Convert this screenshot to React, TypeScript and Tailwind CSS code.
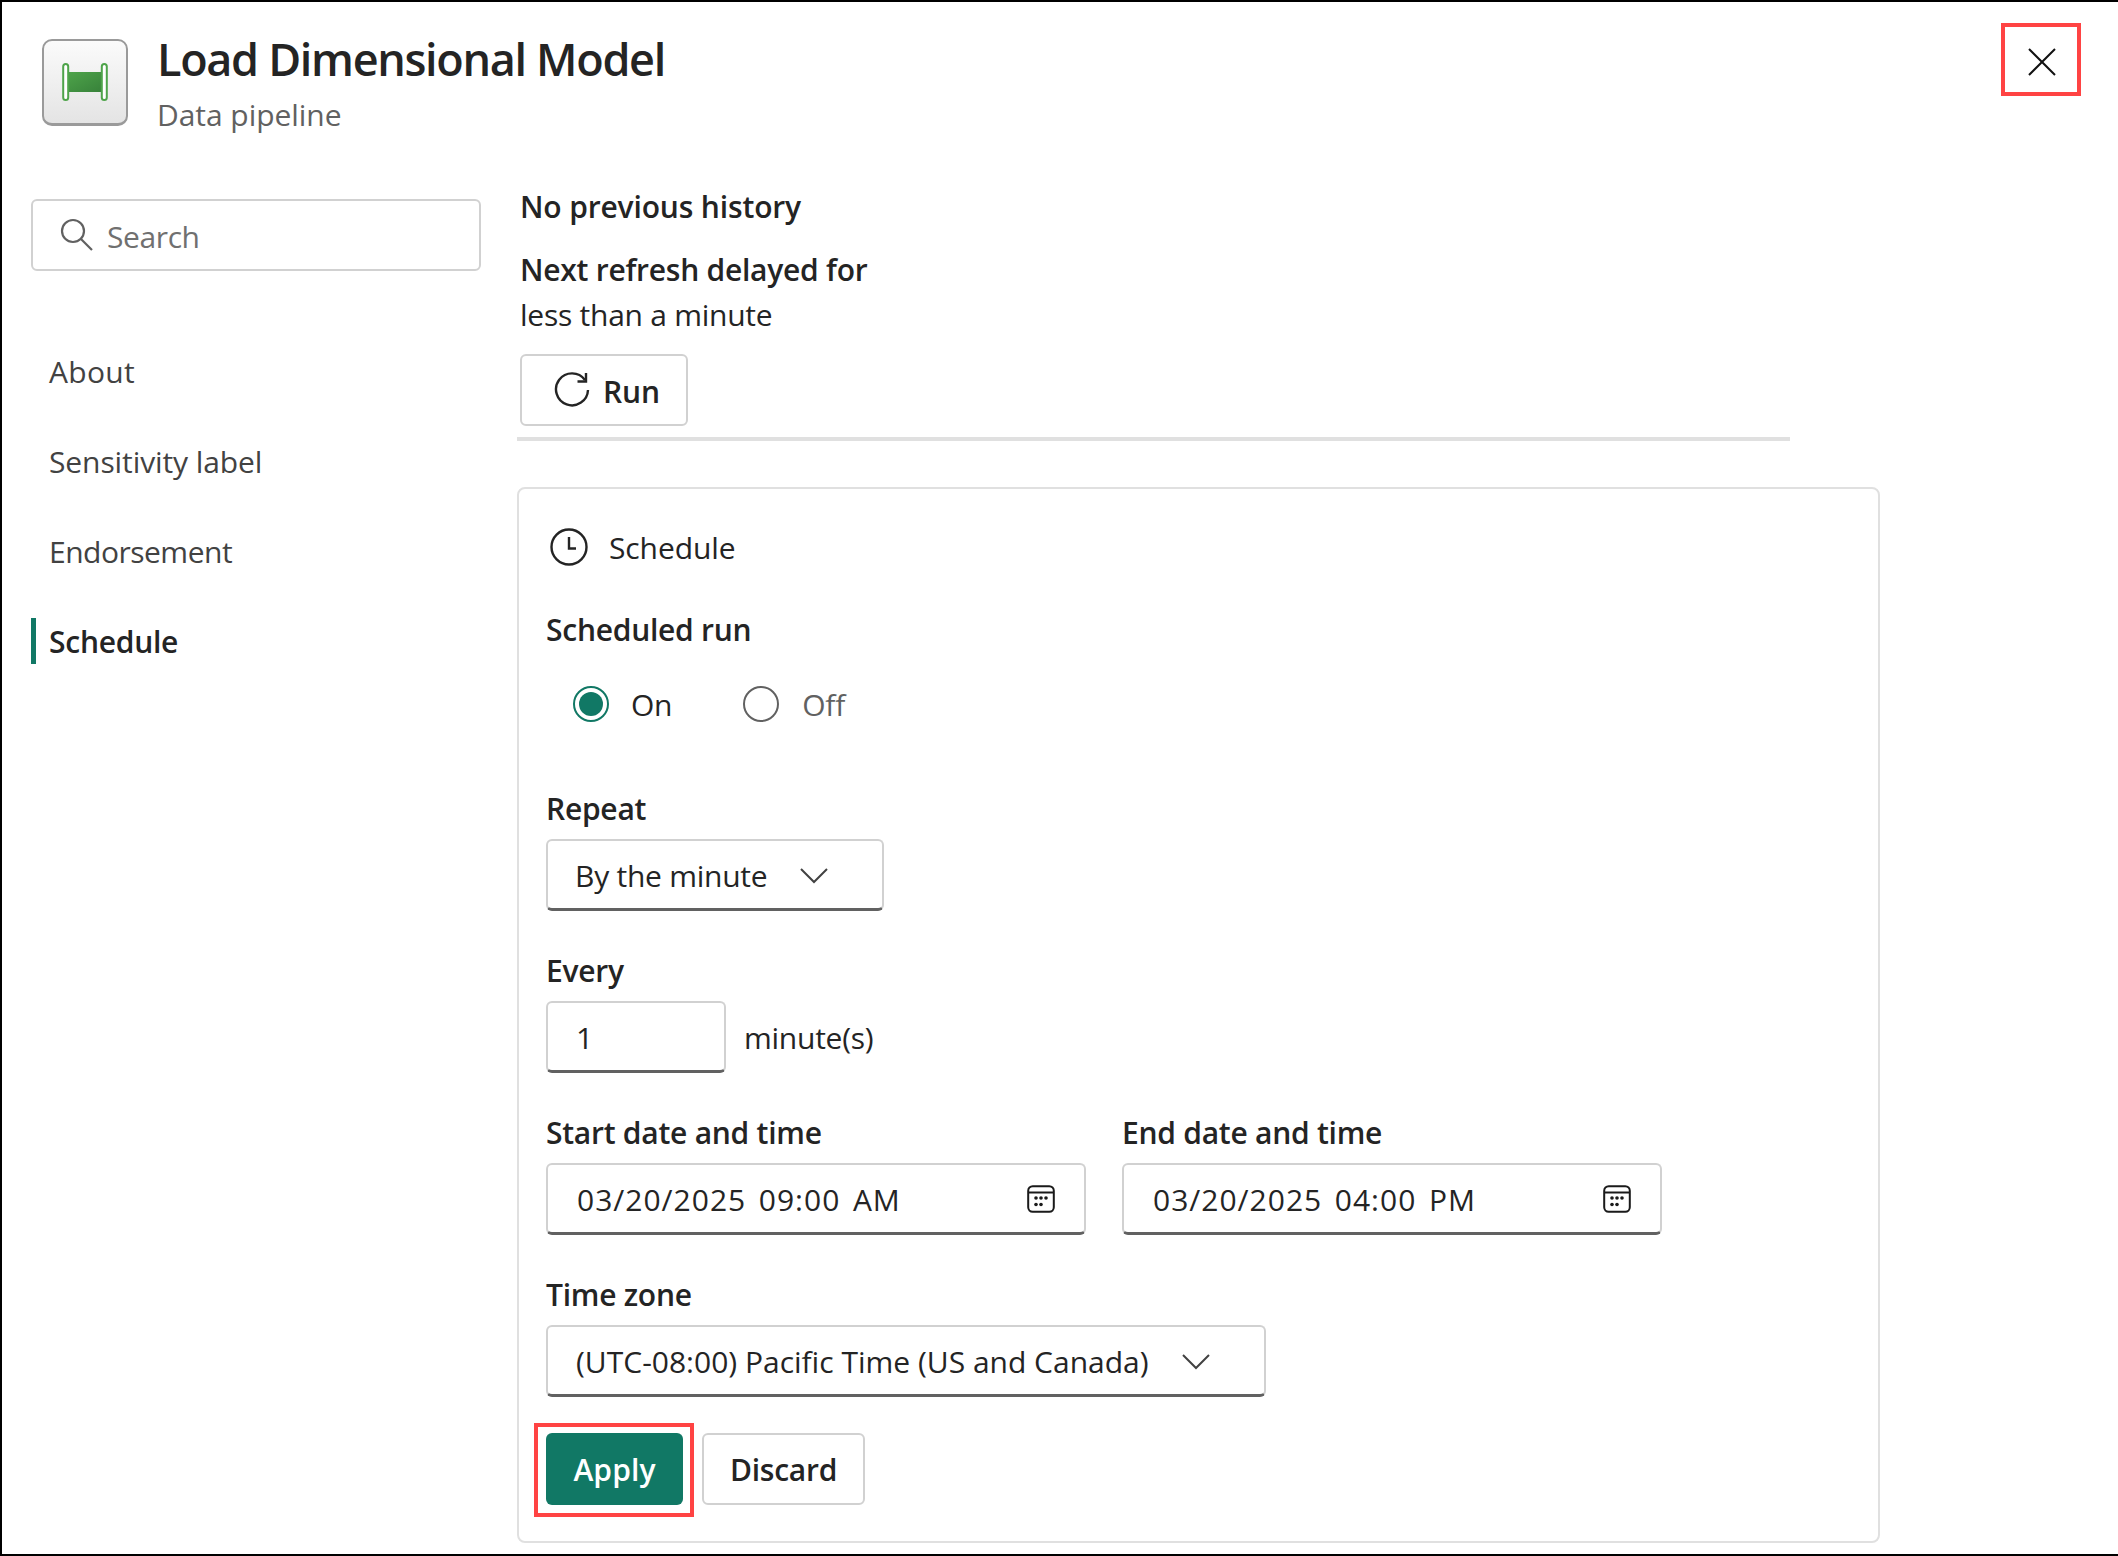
import React from "react";

const F = "font-['Open_Sans','Noto_Sans',sans-serif]";

function Chevron() {
  return (
    <svg width="30" height="18" viewBox="0 0 30 18" fill="none" stroke="#424242" strokeWidth="2">
      <path d="M2 2 L15 15 L28 2" />
    </svg>
  );
}

function Calendar() {
  return (
    <svg width="28" height="28" viewBox="0 0 28 28" fill="none" className="shrink-0 mt-[-2px]">
      <rect x="1.2" y="1.2" width="25.6" height="25.6" rx="4.5" stroke="#1a1a1a" strokeWidth="2" />
      <path d="M1.5 7.5 H26.5" stroke="#1a1a1a" strokeWidth="2" />
      <g fill="#1a1a1a">
        <circle cx="9" cy="13" r="1.8" /><circle cx="14" cy="13" r="1.8" /><circle cx="19" cy="13" r="1.8" />
        <circle cx="9" cy="19.5" r="1.8" /><circle cx="14" cy="19.5" r="1.8" />
      </g>
    </svg>
  );
}

function Label({ children, className = "" }: { children: React.ReactNode; className?: string }) {
  return <div className={"h-[42px] flex items-center text-[30px] font-semibold tracking-[-0.25px] text-[#242424] " + className}>{children}</div>;
}

function Field({ w, children }: { w: string; children: React.ReactNode }) {
  return (
    <div className={w + " h-[72px] flex items-center pt-[2px] rounded-[6px] border-2 border-[#d1d1d1] border-b-[3px] border-b-[#616161] bg-white text-[30px] tracking-[-0.25px] text-[#242424]"}>
      {children}
    </div>
  );
}

function NavItem({ label, active, track }: { label: string; active?: boolean; track: string }) {
  return (
    <div className="relative h-[46px] flex items-center pl-[18px] mb-[44px]">
      {active && <span className="absolute left-0 top-0 h-[46px] w-[5px] bg-[#117865]" />}
      <span className={"text-[30px] " + track + " " + (active ? "font-semibold text-[#242424]" : "text-[#424242]")}>{label}</span>
    </div>
  );
}

function DateField({ value }: { value: string }) {
  return (
    <Field w="w-[540px]">
      <span className="pl-[29px] flex-1 whitespace-pre tracking-[1px] [word-spacing:-2.5px]">{value}</span>
      <span className="pr-[29px] flex"><Calendar /></span>
    </Field>
  );
}

export default function App() {
  return (
    <div className={F + " relative w-[2118px] h-[1556px] bg-white overflow-hidden border-t-2 border-l-2 border-b-2 border-black"}>
      {/* header */}
      <div className="flex pl-[40px] pt-[37px] h-[197px]">
        <div className="w-[86px] h-[87px] rounded-[10px] border-2 border-[#9a9a9a] border-b-[3px] bg-gradient-to-b from-[#fbfbfb] to-[#e4e4e4] flex items-center justify-center">
          <svg width="46" height="38" viewBox="0 0 46 38">
            <defs>
              <linearGradient id="pipe" x1="0" y1="0" x2="1" y2="1">
                <stop offset="0" stopColor="#4ea44a" />
                <stop offset="1" stopColor="#37813a" />
              </linearGradient>
            </defs>
            <rect x="5" y="9" width="36" height="20" fill="url(#pipe)" />
            <rect x="1.2" y="1" width="5" height="36" rx="2.5" fill="#fff" stroke="#4ea44a" strokeWidth="2" />
            <rect x="39.8" y="1" width="5" height="36" rx="2.5" fill="#fff" stroke="#4ea44a" strokeWidth="2" />
          </svg>
        </div>
        <div className="ml-[29px]">
          <div className="text-[45px] leading-[60px] mt-[-10px] font-semibold tracking-[-1.32px] text-[#242424]">Load Dimensional Model</div>
          <div className="text-[30px] leading-[44px] mt-[4px] tracking-[-0.05px] text-[#616161]">Data pipeline</div>
        </div>
      </div>

      {/* body */}
      <div className="flex">
        <aside className="w-[515px] pl-[29px] shrink-0">
          <div className="w-[450px] h-[72px] rounded-[6px] border-2 border-[#d1d1d1] flex items-center pl-[27px]">
            <svg width="34" height="34" viewBox="0 0 34 34" fill="none" stroke="#616161" strokeWidth="2.2">
              <circle cx="13" cy="13" r="11" />
              <path d="M21 21 L32 32" />
            </svg>
            <span className="ml-[13px] pt-[2px] text-[30px] tracking-[-0.4px] text-[#707070]">Search</span>
          </div>
          <nav className="mt-[77px]">
            <NavItem label="About" track="tracking-[0.3px]" />
            <NavItem label="Sensitivity label" track="tracking-[-0.1px]" />
            <NavItem label="Endorsement" track="tracking-[-0.5px]" />
            <NavItem label="Schedule" track="tracking-[-0.25px]" active />
          </nav>
        </aside>

        <main className="flex-1">
          <div className="pl-[3px]">
            <div className="mt-[-14px] h-[42px] flex items-center text-[30px] font-semibold tracking-[-0.15px] text-[#242424]">No previous history</div>
            <div className="mt-[21px] h-[42px] flex items-center text-[30px] font-semibold tracking-[-0.25px] text-[#242424]">Next refresh delayed for</div>
            <div className="mt-[3px] h-[42px] flex items-center text-[30px] tracking-[-0.25px] text-[#242424]">less than a minute</div>
            <div className="mt-[19px] w-[168px] h-[72px] rounded-[6px] border-2 border-[#d1d1d1] flex items-center pl-[32px]">
              <svg width="36" height="36" viewBox="0 0 36 36" fill="none" stroke="#242424" strokeWidth="2.4">
                <path d="M31 8 A 16 16 0 1 0 34 18" />
                <path d="M32 1 V9.5 H23.5" />
              </svg>
              <span className="ml-[13px] pt-[3px] text-[30px] font-semibold tracking-[-0.1px] text-[#242424]">Run</span>
            </div>
          </div>
          <div className="mt-[11px] w-[1273px] h-[4px] bg-[#e0e0e0]" />

          <section className="mt-[46px] w-[1363px] h-[1056px] rounded-[8px] border-2 border-[#e0e0e0] pl-[27px]">
            <div className="flex items-center h-[40px] mt-[38px] pl-[4px]">
              <svg width="38" height="38" viewBox="0 0 38 38" fill="none" stroke="#242424" strokeWidth="2.4">
                <circle cx="19" cy="19" r="17.5" />
                <path d="M19 9 V20.5 H26" />
              </svg>
              <span className="ml-[21px] text-[30px] tracking-[-0.1px] text-[#242424]">Schedule</span>
            </div>

            <Label className="mt-[41px]">Scheduled run</Label>

            <div className="flex items-center h-[42px] mt-[33px] pl-[27px]">
              <span className="w-[36px] h-[36px] rounded-full border-2 border-[#117865] flex items-center justify-center">
                <span className="w-[24px] h-[24px] rounded-full bg-[#117865]" />
              </span>
              <span className="ml-[22px] text-[30px] tracking-[-0.25px] text-[#242424]">On</span>
              <span className="ml-[71px] w-[36px] h-[36px] rounded-full border-2 border-[#616161]" />
              <span className="ml-[23px] text-[30px] tracking-[-0.25px] text-[#616161]">Off</span>
            </div>

            <Label className="mt-[62px]">Repeat</Label>
            <div className="mt-[10px]">
              <Field w="w-[338px]">
                <span className="pl-[27px]">By the minute</span>
                <span className="ml-[32px] flex"><Chevron /></span>
              </Field>
            </div>

            <Label className="mt-[38px]">Every</Label>
            <div className="mt-[10px] flex items-center">
              <Field w="w-[180px]"><span className="pl-[28px]">1</span></Field>
              <span className="ml-[18px] text-[30px] tracking-[-0.25px] text-[#242424]">minute(s)</span>
            </div>

            <div className="mt-[38px] flex gap-[36px]">
              <div>
                <Label>Start date and time</Label>
                <div className="mt-[10px]"><DateField value="03/20/2025  09:00  AM" /></div>
              </div>
              <div>
                <Label>End date and time</Label>
                <div className="mt-[10px]"><DateField value="03/20/2025  04:00  PM" /></div>
              </div>
            </div>

            <Label className="mt-[38px]">Time zone</Label>
            <div className="mt-[10px]">
              <Field w="w-[720px]">
                <span className="pl-[28px] tracking-[0px]">(UTC-08:00) Pacific Time (US and Canada)</span>
                <span className="ml-[32px] flex"><Chevron /></span>
              </Field>
            </div>

            <div className="mt-[36px] flex gap-[19px]">
              <div className="w-[137px] h-[72px] rounded-[6px] bg-[#117865] flex items-center justify-center text-[30px] font-semibold tracking-[0.1px] text-white">Apply</div>
              <div className="w-[163px] h-[72px] rounded-[6px] border-2 border-[#d1d1d1] flex items-center justify-center text-[30px] font-semibold tracking-[-0.25px] text-[#242424]">Discard</div>
            </div>
          </section>
        </main>
      </div>

      {/* annotation overlays */}
      <div className="absolute left-[1999px] top-[21px] w-[80px] h-[73px] border-[4px] border-[#ff4343] flex items-center justify-center pt-[5px] pl-[2px]">
        <svg width="28" height="28" viewBox="0 0 28 28" stroke="#111" strokeWidth="2" fill="none">
          <path d="M1 1 L27 27 M27 1 L1 27" />
        </svg>
      </div>
      <div className="absolute left-[532px] top-[1421px] w-[160px] h-[94px] border-[4px] border-[#ff4343]" />
    </div>
  );
}
